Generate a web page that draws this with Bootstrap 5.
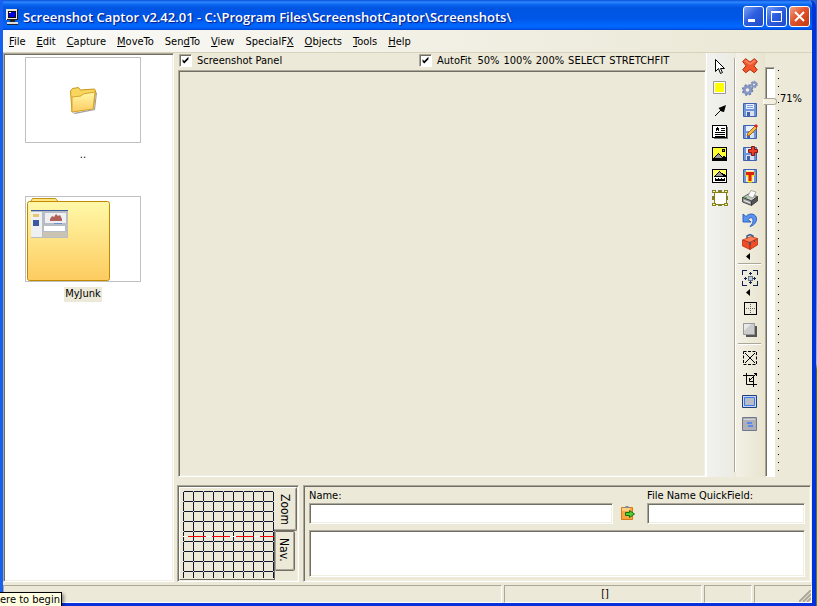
<!DOCTYPE html>
<html lang="en">
<head>
<meta charset="utf-8">
<meta name="viewport" content="width=device-width, initial-scale=1">
<title>Screenshot Captor v2.42.01</title>
<link rel="stylesheet" href="https://cdn.jsdelivr.net/npm/bootstrap@5.3.0/dist/css/bootstrap.min.css">
<style>
:root{--face:#ece9d8;--shade:#aca899;--dark:#716f64;--lite:#f1efe2}
body{background:linear-gradient(#2b62d0,#4f83de 45%,#9db6e0 60%,#3b7420 61%,#4c8a28);font:11px/14px "DejaVu Sans Condensed","DejaVu Sans",sans-serif;color:#000}
button,input,textarea{font:inherit;color:inherit;border-radius:0}
.win{margin-right:1px;background:var(--face);border:solid #0831d9;border-width:0 4px 3px 3px;border-color:#0034d8 #0034d8 #0831d9 #1661f0;border-top-right-radius:7px;overflow:hidden}
.titlebar{height:30px;margin:0 -4px 0 -3px;padding:3px 6px 0 5px;background:linear-gradient(#0a4fd8,#2f88ff 7%,#0f6af2 14%,#0055e2 26%,#0056e6 60%,#0068ff 86%,#0060fa 93%,#0046d0)}
.caption{font:600 13px/18px "Open Sans","Noto Sans",sans-serif;color:#fff;text-shadow:1px 1px 1px #0a1883}
.ctls{gap:2px}
.ctl{width:21px;height:21px;border:1px solid #fff;border-radius:3px;background:linear-gradient(135deg,#7ba2f5,#2d5fe0 45%,#1f4bc8);color:#fff}
.ctl-close{background:linear-gradient(135deg,#f0a088,#e2532c 45%,#c03a14)}
.menubar{height:23px;padding-left:1px;background:linear-gradient(90deg,#fafaf8,#ece9d8 90%);border-bottom:1px solid #d8d2bd}
.menubar a{color:#000;padding:0 6px 0 5px;line-height:24px}
.menubar u{text-underline-offset:1px}
.fill{min-height:0;min-width:0}
.sunk{border:1px solid;border-color:var(--shade) #fff #fff var(--shade);box-shadow:inset 1px 1px var(--dark),inset -1px -1px var(--lite)}
.side{width:171px;background:#fff;padding:3px 0 0 21px}
.right{margin-left:3px}
.stage{margin-left:1px}
.thumb{width:116px;height:86px;border:1px solid #c0c0c0;display:block}
.entry{width:116px;margin-bottom:33px}
.entry span{height:15px;line-height:14px;margin-top:5px;padding:0 1px}
.chosen{background:var(--face)}
.chk{appearance:none;width:13px;height:13px;margin:0;background:#fff url("data:image/svg+xml,%3Csvg xmlns='http://www.w3.org/2000/svg' viewBox='0 0 13 13'%3E%3Cpath d='M3 5v3l2 2 5-5V2L5 7z'/%3E%3C/svg%3E");border:1px solid;border-color:var(--shade) #fff #fff var(--shade);box-shadow:inset 1px 1px var(--dark)}
.paneltop{height:17px;padding:1px 0 0 1px}
.paneltop label{padding-left:5px}
.modes{width:287px}
.flat{border:0;padding:0;margin-left:4px;background:none;line-height:14px}
.modes label{margin-top:0;padding-right:2px}
.tools{width:28px;padding:2px 2px 0 0;background:linear-gradient(90deg,#f1f1ef,#ecece4);border-left:1px solid #fff}
.tools-b{width:29px;background:linear-gradient(90deg,#f3f1e6,#e8e4cf)}
.vline{width:2px;margin:5px 0;background:linear-gradient(90deg,var(--shade) 50%,#fff 50%)}
.tool{border:0;padding:0;background:none;width:22px;height:22px;display:flex;align-items:center;justify-content:center}
.tool svg{width:16px;height:16px}
.drop{width:100%;height:8px;padding:0 0 0 10px;border:0;background:none;display:flex}
.rule{width:23px;height:2px;margin:2px 0;background:linear-gradient(var(--shade) 50%,#fff 50%)}
.scale{width:47px;padding-top:14px}
.zoomer{appearance:none;writing-mode:vertical-lr;width:10px;height:100%;margin:0;background:#fff;border:1px solid;border-color:var(--shade) #fff #fff var(--shade);box-shadow:inset 1px 1px var(--dark)}
.zoomer::-webkit-slider-thumb{appearance:none;width:14px;height:7px;background:#f3f0e2;border:1px solid var(--shade);border-left-color:#fff;border-radius:0 4px 4px 0}
.ticks{width:1px;margin:3px 0 0 3px;background:repeating-linear-gradient(#000 0 1px,transparent 1px 8px)}
.pct{margin:26px 0 0 1px;line-height:12px}
.bottom{gap:4px;margin-right:1px}
.zoombox{width:122px;padding:1px}
.gridpane{background:var(--face);border:1px solid;border-color:#fff var(--dark) var(--dark) #fff;padding:3px 0 0 3px;width:96px;flex:none}
.vtab{writing-mode:vertical-rl;background:var(--face);border:1px solid;border-color:#fff var(--dark) var(--dark) #fff;box-shadow:inset -1px -1px var(--shade);padding:6px 3px 0;font-size:12px;text-align:left;border-radius:0 2px 2px 0}
.tab-zoom{width:23px;height:44px;border-left:0;margin-left:-1px}
.tab-nav{width:20px;height:40px;border-color:var(--dark) var(--dark) var(--dark) var(--shade)}
.namebox{padding:3px 5px 4px}
.field{background:#fff;width:100%;outline:0;padding:0 3px;display:block}
.line{height:21px}
.names{margin-bottom:6px}
.notes{resize:none;height:47px}
.quick{width:158px}
.status{height:18px;margin-top:3px;gap:2px}
.cell{border:1px solid;border-color:var(--shade) #fff #fff var(--shade)}
.cell-a{flex:0 1 499px}.cell-b{flex:1 1 198px;padding-left:4px;line-height:16px}.cell-c{width:48px}.cell-d{width:58px}
.tip{position:absolute;left:-1px;bottom:0;height:14px;background:#ffffe1;border:1px solid #000;border-bottom:0;padding:0 1px 0 0;box-shadow:2px 2px 3px #0006;line-height:13px;white-space:nowrap}
</style>
<script src="https://cdn.jsdelivr.net/npm/bootstrap@5.3.0/dist/js/bootstrap.bundle.min.js"></script>
</head>
<body class="vh-100 overflow-hidden">
<div class="win vh-100 d-flex flex-column">
  <header class="titlebar d-flex flex-shrink-0 align-items-center">
    <svg class="me-1" width="14" height="16" viewBox="0 0 14 16" shape-rendering="crispEdges" aria-hidden="true"><path fill="#ece9d8" d="M1 0h12v11H1z"/><path fill="#222" d="M12 0h1v11H2v-1h10z"/><path fill="#101010" d="M3 2h8v7H3z"/><path fill="#0000f0" d="M4 3h6v5H4z"/><path fill="#fff" d="M4 3h2v1H4z"/><path fill="#222" d="M5 11h5v2H5z"/><path fill="#ddd" d="M2 13h11v2H2z"/><path fill="#222" d="M2 15h11v1H2z"/></svg>
    <div class="caption flex-grow-1 text-truncate">Screenshot Captor v2.42.01 - C:\Program Files\ScreenshotCaptor\Screenshots\</div>
    <div class="ctls d-flex">
      <button class="ctl p-0 d-flex" aria-label="Minimize"><svg width="19" height="19"><path fill="#fff" d="M4 12h7v3H4z"/></svg></button>
      <button class="ctl p-0 d-flex" aria-label="Maximize"><svg width="19" height="19"><path fill="none" stroke="#fff" d="M4.500 5.500h10v9h-10zM4 4.500h11"/></svg></button>
      <button class="ctl ctl-close p-0 d-flex" aria-label="Close"><svg width="19" height="19"><path stroke="#fff" stroke-width="2" d="M5 5l9 9M14 5l-9 9"/></svg></button>
    </div>
  </header>
  <nav class="menubar d-flex flex-shrink-0">
    <a class="text-decoration-none" href="#"><u>F</u>ile</a><a class="text-decoration-none" href="#"><u>E</u>dit</a><a class="text-decoration-none" href="#"><u>C</u>apture</a><a class="text-decoration-none" href="#"><u>M</u>oveTo</a><a class="text-decoration-none" href="#">Sen<u>d</u>To</a><a class="text-decoration-none" href="#"><u>V</u>iew</a><a class="text-decoration-none" href="#">SpecialF<u>X</u></a><a class="text-decoration-none" href="#"><u>O</u>bjects</a><a class="text-decoration-none" href="#"><u>T</u>ools</a><a class="text-decoration-none" href="#"><u>H</u>elp</a>
  </nav>
  <div class="fill d-flex flex-grow-1">
    <aside class="side sunk flex-shrink-0">
      <div class="entry d-flex flex-column align-items-center">
        <div class="thumb d-flex align-items-center justify-content-center">
          <svg width="28" height="28" viewBox="0 0 28 28" aria-hidden="true"><defs><linearGradient id="fg" x2="0" y2="1"><stop stop-color="#fff9a8"/><stop offset="1" stop-color="#fdcb60"/></linearGradient></defs><path fill="#777" opacity=".7" d="M4 27l21-4 2-17 1 1-2 17-20 4z"/><path fill="#f7d55e" stroke="#c99a1c" d="M1.500 5l2-2.500 6-1 2 2.500 14-1 1 2-2 17L3 26z"/><path fill="url(#fg)" stroke="#d8a52c" d="M3 11l9-1 2-2 12-2-2 17-21 3z"/></svg>
        </div>
        <span>..</span>
      </div>
      <div class="entry d-flex flex-column align-items-center">
        <div class="thumb">
          <svg width="84" height="84" viewBox="0 0 84 84" aria-hidden="true"><path fill="#ffe680" stroke="#c69313" d="M4.500 5l2-3.500h23l3 3.500z"/><rect x="1.500" y="4.500" width="82" height="79" rx="2" fill="url(#fg)" stroke="#c08a00"/><path fill="none" stroke="#fff3a6" d="M4 6h77"/><path fill="#b8bcc4" d="M5 13h37v28H5z"/><path fill="#eef0f2" d="M5 15h11v25H5zM19 16h21v10H19z"/><path fill="#3d5a9e" d="M7 23h6v6H7zM5 13h37v1H5z"/><path fill="#e8c66c" d="M7 17h6v3H7z"/><path fill="#b0625a" d="M24 22l2-3 2 1 2-3 2 2 2-1 2 4v2H24z"/><path fill="#6f8fd0" d="M28 26h8v1h-8z"/><path fill="#fff" d="M18 29h21v5H18z"/><path fill="#c9c4b4" d="M17 35h24v5H17z"/></svg>
        </div>
        <span class="chosen">MyJunk</span>
      </div>
    </aside>
    <div class="right fill flex-grow-1 d-flex flex-column">
      <div class="fill d-flex flex-grow-1 mb-2">
        <main class="stage flex-grow-1 d-flex flex-column">
          <div class="paneltop d-flex justify-content-between">
            <div class="d-flex"><input class="chk" type="checkbox" id="sp" checked><label for="sp">Screenshot Panel</label></div>
            <div class="modes d-flex align-items-start"><input class="chk" type="checkbox" id="af" checked><label for="af">AutoFit</label><button class="flat">50%</button><button class="flat">100%</button><button class="flat">200%</button><button class="flat">SELECT</button><button class="flat">STRETCHFIT</button></div>
          </div>
          <div class="sunk flex-grow-1"></div>
        </main>
        <div class="tools d-flex flex-column align-items-center">
          <button class="tool" aria-label="Select"><svg viewBox="0 0 16 16"><path fill="#fff" stroke="#000" d="M3.500 1.500v12l3-3 2 5 2-1-2-4h4z"/></svg></button>
          <button class="tool" aria-label="Highlight"><svg viewBox="0 0 16 16"><path fill="#fff" stroke="#999" d="M1.500 1.500h12v12h-12z"/><path fill="#ff0" d="M3 3h9v9H3z"/></svg></button>
          <button class="tool" aria-label="Arrow"><svg viewBox="0 0 16 16"><path stroke="#000" d="M3 14l6-6"/><path d="M14 3L12 10 9.500 9.500 6.500 6z"/></svg></button>
          <button class="tool" aria-label="Text caption"><svg viewBox="0 0 16 16" shape-rendering="crispEdges"><path fill="#777" d="M2 15h14V3h-1v11H2z"/><path fill="#fff" stroke="#000" d="M.5 1.500h14v12H.5z"/><path d="M5 3h1v1h1v3H6V6H5v1H4V4h1zM9 4h4v1H9zM9 6h4v1H9zM3 8h10v1H3zM3 10h10v1H3zM3 12h10v1H3z"/></svg></button>
          <button class="tool" aria-label="Insert image"><svg viewBox="0 0 16 16" shape-rendering="crispEdges"><path fill="#ff3" stroke="#000" d="M.5 1.500h14v13H.5z"/><path fill="#aa0" stroke="#000" d="M10.500 3.500h2v2h-2z"/><path d="M1 13l5-6 4 4 2-1 3 3v1H1z"/><path fill="#999" d="M3 12l3-4 4 4z"/></svg></button>
          <button class="tool" aria-label="Image caption"><svg viewBox="0 0 16 16" shape-rendering="crispEdges"><path fill="#ff6" stroke="#000" d="M.5 1.500h14v13H.5z"/><path d="M1 9l6-6 5 3 3 3z"/><path fill="#999" d="M4 8l3-4 5 4z"/><path fill="#fff" d="M1 9h13v5H1z"/><path d="M3 10h1v1h2v-1h1v1h2v-1h1v1h2v-1h1v3H3z"/></svg></button>
          <button class="tool" aria-label="Shape"><svg viewBox="0 0 16 16" shape-rendering="crispEdges"><path fill="#fff" stroke="#85801e" d="M2 2h12v12H2z"/><path fill="#85801e" d="M0 0h4v3H0zM6 0h4v2H6zM12 0h4v3h-4zM0 6h2v4H0zM14 6h2v4h-2zM0 13h4v3H0zM6 14h4v2H6zM12 13h4v3h-4z"/><path fill="#ffffb0" d="M1 1h2v1H1zM13 1h2v1h-2zM1 14h2v1H1zM13 14h2v1h-2z"/></svg></button>
        </div>
        <div class="vline"></div>
        <div class="tools tools-b border-0 d-flex flex-column align-items-center">
          <button class="tool" aria-label="Delete"><svg viewBox="0 0 16 16"><path fill="#f2562c" stroke="#b52a08" d="M.7 3.500l3-2.800L8 4.200 12.300.7l3 2.800L12 7.800l3.300 4-3 3L8 11.500l-4.300 3.300-3-3L4 7.800z"/><path fill="#ffa080" opacity=".6" d="M2 3l2-1 4 3 4-3 2 1-6 4z"/></svg></button>
          <button class="tool" aria-label="Options"><svg viewBox="0 0 16 16"><circle cx="5.500" cy="10" r="3.300" fill="none" stroke="#8797c4" stroke-width="3"/><circle cx="5.500" cy="10" r="5" fill="none" stroke="#6c7fb4" stroke-width="1.500" stroke-dasharray="2 2"/><circle cx="12" cy="4.500" r="2" fill="none" stroke="#8797c4" stroke-width="2"/><circle cx="12" cy="4.500" r="3.300" fill="none" stroke="#6c7fb4" stroke-dasharray="1.500 1.500"/></svg></button>
          <button class="tool" aria-label="Save"><svg viewBox="0 0 16 16"><path fill="#6f95dc" stroke="#3e62ae" d="M1.500 1.500h13v13h-13z"/><path fill="#e8f0ff" d="M4 2h8v5H4z"/><path fill="#7e9fdc" d="M5 3h6v1H5zM5 5h6v1H5z"/><path fill="#dbe2ee" d="M4 9h8v5H4z"/><path fill="#3e62ae" d="M5 10h3v4H5z"/></svg></button>
          <button class="tool" aria-label="Save as"><svg viewBox="0 0 16 16"><path fill="#6f95dc" stroke="#3e62ae" d="M1.500 1.500h13v13h-13z"/><path fill="#e8f0ff" d="M4 2h8v5H4z"/><path fill="#dbe2ee" d="M4 9h8v5H4z"/><path fill="#3e62ae" d="M5 10h3v4H5z"/><path fill="#f7b94a" stroke="#a76818" d="M5 12l1-3 7-7 2 2-7 7z"/><path fill="#d22" d="M12 2l2-2 2 2-1.500 2z"/></svg></button>
          <button class="tool" aria-label="Save copy"><svg viewBox="0 0 16 16"><path fill="#6f95dc" stroke="#3e62ae" d="M1.500 1.500h13v13h-13z"/><path fill="#e8f0ff" d="M4 2h8v5H4z"/><path fill="#dbe2ee" d="M4 9h8v5H4z"/><path fill="#3e62ae" d="M5 10h3v4H5z"/><path fill="#e8402a" stroke="#8e1404" d="M9.500.5h3v3h3v3h-3v3h-3v-3h-3v-3h3z"/></svg></button>
          <button class="tool" aria-label="Save thumbnail"><svg viewBox="0 0 16 16"><path fill="#6f95dc" stroke="#3e62ae" d="M1.500 1.500h13v13h-13z"/><path fill="#e8f0ff" d="M4 2h8v12H4z"/><path fill="#ffe800" stroke="#ffe800" d="M4 4h8v4h-2v6H6V8H4z"/><path fill="#e02010" d="M4 4h8v3H9.500v6h-3V7H4z"/></svg></button>
          <button class="tool" aria-label="Print"><svg viewBox="0 0 16 16"><path fill="#c8c8c0" stroke="#444" stroke-width=".8" d="M.5 7.500l6-3.500 9 2.500-6 4.500z"/><path fill="#fff" stroke="#888" stroke-width=".7" d="M6 6l3-5.500 5 1.500-3 6z"/><path fill="#999" stroke="#333" stroke-width=".8" d="M.5 7.500l9 3.500v4.500L.5 12z"/><path fill="#555" stroke="#333" stroke-width=".8" d="M9.500 11l6-4.500v4.500l-6 4.500z"/><path stroke="#eee" d="M2 10.500l6 2.300"/><path fill="#3c3" d="M3 7h2v1H3z"/></svg></button>
          <button class="tool" aria-label="Undo"><svg viewBox="0 0 16 16"><path fill="#5b94ee" stroke="#2258c0" stroke-width=".9" d="M1 2v8h8L6 7.500C8 5 11 5 11 8.500c0 2.500-1 4-3 6 4-1 6.500-4 6.500-7.500C14.500 2 8 0 4 4.500z"/></svg></button>
          <button class="tool" aria-label="Toolbox"><svg viewBox="0 0 16 16"><path fill="none" stroke="#3c5a90" stroke-width="1.500" d="M5 5V2l3-1.500L11 2v2"/><path fill="#ff8058" stroke="#c03010" stroke-width=".7" d="M.5 6L9 2.500l6.500 2L8 8.500z"/><path fill="#f04c28" stroke="#b02808" stroke-width=".7" d="M.5 6L8 8.500V15.500L.5 12zM8 8.500l7.500-4V11L8 15.500z"/><path fill="#456" d="M7 8h2v3H7zM12 6h1v2h-1z"/></svg></button>
          <button class="drop" aria-label="Toolbox menu"><svg width="5" height="7"><path d="M4 0v7L0 3.500z"/></svg></button>
          <div class="rule"></div>
          <button class="tool" aria-label="Resize"><svg viewBox="0 0 16 16" shape-rendering="crispEdges"><path fill="none" stroke="#10204c" d="M.5 5V.5H5M11 .5h4.500V5M15.500 11v4.500H11M5 15.500H.5V11M2 8.500h3M11 8.500h3M8.500 2v3M8.500 11v3M3.500 7v3M12.500 7v3M7 3.500h3M7 12.500h3"/><path fill="#bcd" stroke="#678" d="M6.500 6.500h4v4h-4z"/></svg></button>
          <button class="drop" aria-label="Resize menu"><svg width="5" height="7"><path d="M4 0v7L0 3.500z"/></svg></button>
          <button class="tool" aria-label="Border"><svg viewBox="0 0 16 16" shape-rendering="crispEdges"><path fill="none" stroke="#000" d="M2.500 2.500h12v12h-12z"/><path stroke="#666" stroke-dasharray="1 1" d="M8.500 4v9M4 8.500h9"/></svg></button>
          <button class="tool" aria-label="Shadow"><svg viewBox="0 0 16 16"><path fill="#555" d="M4 4h11v11H4z"/><path fill="#ccc" stroke="#999" d="M1.500 1.500h11v11h-11z"/><path fill="#e8e8e8" d="M2 2h7L2 9z"/></svg></button>
          <div class="rule"></div>
          <button class="tool" aria-label="Clear selection"><svg viewBox="0 0 16 16"><path fill="none" stroke="#000" stroke-dasharray="3 1.500" d="M1.500 1.500h13v13h-13z"/><path stroke="#000" d="M3 3l10 10M13 3L3 13"/></svg></button>
          <button class="tool" aria-label="Crop"><svg viewBox="0 0 16 16"><path fill="none" stroke="#000" d="M4.500 1v11.500H15M1 3.500h10.500V15M15 1l-8 8M7.500 6v3.500H11M12 1.500h2.500V4"/></svg></button>
          <button class="tool" aria-label="Fit window"><svg viewBox="0 0 16 16"><path fill="#c8d8f4" stroke="#223e78" d="M.5 1.500h14v12H.5z"/><path fill="#b8bcc4" stroke="#3c78f0" d="M2.500 3.500h10v8h-10z"/></svg></button>
          <button class="tool" aria-label="Shrink"><svg viewBox="0 0 16 16"><path fill="#b0b0b4" stroke="#6f7890" d="M.5 1.500h14v13H.5z"/><path stroke="#d4d4d8" d="M2 3.500h11"/><path fill="#5a88f0" d="M5 6h5v2H5zM6 9h5v2H6z"/></svg></button>
        </div>
        <div class="scale d-flex">
          <input class="zoomer" type="range" min="0" max="200" value="15" aria-label="Zoom level">
          <div class="ticks"></div>
          <div class="pct">71%</div>
        </div>
      </div>
      <div class="bottom d-flex">
        <section class="zoombox sunk d-flex">
          <div class="gridpane">
            <svg class="d-block" width="91" height="87" viewBox="0 0 91 87" shape-rendering="crispEdges" aria-hidden="true"><defs><pattern id="gr" width="10" height="10" patternUnits="userSpaceOnUse"><path fill="#10152a" d="M0 0h10v1H0zM0 0h1v10H0z"/><path fill="#dde" d="M0 0h1v1H0z"/></pattern></defs><rect width="91" height="87" fill="url(#gr)"/><rect y="45" width="91" height="1" fill="#fff"/><g fill="#ff0000"><rect x="5" y="45" width="18" height="1"/><rect x="29" y="45" width="18" height="1"/><rect x="53" y="45" width="18" height="1"/><rect x="77" y="45" width="14" height="1"/></g></svg>
          </div>
          <div class="d-flex flex-column">
            <button class="vtab tab-zoom">Zoom</button>
            <button class="vtab tab-nav">Nav.</button>
          </div>
        </section>
        <section class="namebox sunk flex-grow-1">
          <div class="names d-flex align-items-end">
            <div class="flex-grow-1"><label class="d-block" for="nm">Name:</label><input class="field line sunk" id="nm"></div>
            <button class="tool mx-1" aria-label="Paste name"><svg viewBox="0 0 16 16"><path fill="#f9a540" stroke="#d87a18" d="M1.500 2.500h11v12h-11z"/><path fill="#ffd080" d="M2 3h8v3H2z"/><path fill="#ddd" stroke="#888" d="M4 2.500h6M5.500 1.500h3"/><path fill="#4fd030" stroke="#187010" d="M5.500 7.500h4v-2l5 3.500-5 3.500v-2h-4z"/></svg></button>
            <div class="quick ms-1"><label class="d-block" for="qf">File Name QuickField:</label><input class="field line sunk" id="qf"></div>
          </div>
          <textarea class="field notes sunk" aria-label="Comments"></textarea>
        </section>
      </div>
    </div>
  </div>
  <footer class="status d-flex flex-shrink-0">
    <div class="cell cell-a"></div>
    <div class="cell cell-b text-center">[]</div>
    <div class="cell cell-c"></div>
    <div class="cell cell-d d-flex justify-content-end align-items-end"><svg width="12" height="12"><path stroke="#aca899" stroke-width="2" d="M0 12L12 0M4 12l8-8M8 12l4-4"/></svg></div>
  </footer>
</div>
<div class="tip" role="tooltip">ere to begin</div>
</body>
</html>
